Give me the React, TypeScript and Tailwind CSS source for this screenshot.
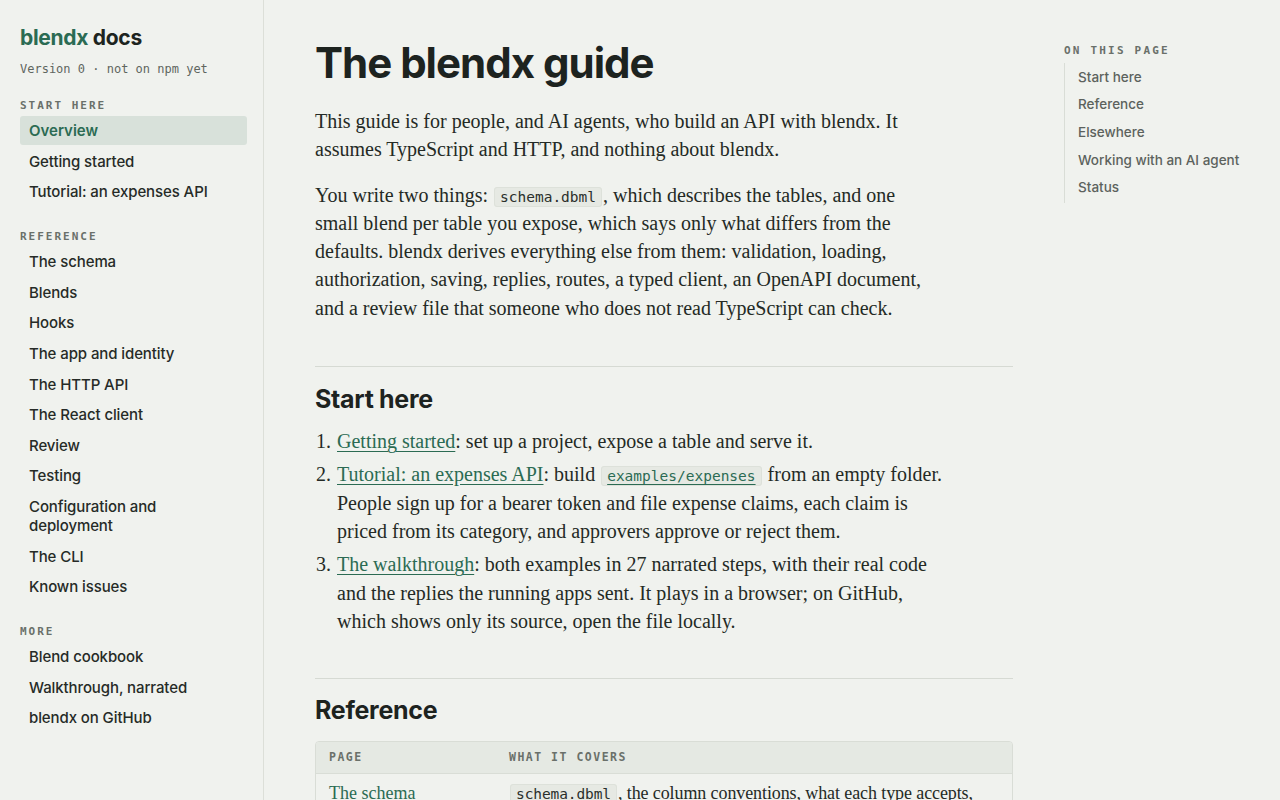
const sans = { fontFamily: 'Inter, "Noto Sans", sans-serif' };

type NavItem = { label: string; active?: boolean };

const nav: { title: string; items: NavItem[] }[] = [
  {
    title: 'Start here',
    items: [{ label: 'Overview', active: true }, { label: 'Getting started' }, { label: 'Tutorial: an expenses API' }],
  },
  {
    title: 'Reference',
    items: [
      { label: 'The schema' },
      { label: 'Blends' },
      { label: 'Hooks' },
      { label: 'The app and identity' },
      { label: 'The HTTP API' },
      { label: 'The React client' },
      { label: 'Review' },
      { label: 'Testing' },
      { label: 'Configuration and deployment' },
      { label: 'The CLI' },
      { label: 'Known issues' },
    ],
  },
  {
    title: 'More',
    items: [{ label: 'Blend cookbook' }, { label: 'Walkthrough, narrated' }, { label: 'blendx on GitHub' }],
  },
];

const toc = ['Start here', 'Reference', 'Elsewhere', 'Working with an AI agent', 'Status'];

function Code({ children, link }: { children: string; link?: boolean }) {
  return (
    <code
      className={
        'mx-[1px] rounded-[3px] border border-[#dde1da] bg-[#e6e9e3] px-[5px] py-[1px] font-["DejaVu_Sans_Mono",monospace] text-[14.5px] leading-none ' +
        (link ? 'text-[#2b6b53] underline decoration-[#2b6b53] underline-offset-[3px]' : 'text-[#2a2f2b]')
      }
    >
      {children}
    </code>
  );
}

function A({ children }: { children: string }) {
  return (
    <a href="#" className="text-[#2b6b53] underline decoration-[1px] underline-offset-[3px]">
      {children}
    </a>
  );
}

function Sidebar() {
  return (
    <aside className="flex h-screen w-[264px] shrink-0 flex-col border-r border-[#dcdfd8] pl-5 pr-4 pt-[24px]" style={sans}>
      <div className="text-[21px] font-bold leading-[28px] tracking-[-0.3px]">
        <span className="text-[#2b6b53]">blendx</span> <span className="text-[#1d2420]">docs</span>
      </div>
      <div className="mt-[9px] font-['DejaVu_Sans_Mono',monospace] text-[12px] leading-[16px] text-[#5f665f]">
        Version 0 · not on npm yet
      </div>
      {nav.map((g, gi) => (
        <div key={g.title} className={gi === 0 ? 'mt-[21px]' : 'mt-[23px]'}>
          <div className="mb-[2px] font-['DejaVu_Sans_Mono',monospace] text-[11px] font-bold uppercase leading-[16px] tracking-[2px] text-[#6a706a]">
            {g.title}
          </div>
          <ul className="flex flex-col gap-[1.6px]">
            {g.items.map((it) => (
              <li
                key={it.label}
                className={
                  'rounded-[3px] px-[9px] py-[5px] text-[15px] leading-[19px] ' +
                  (it.active ? 'bg-[#d8e1da] font-semibold text-[#2b6b53]' : 'font-medium tracking-[-0.1px] text-[#262b27]')
                }
              >
                {it.label}
              </li>
            ))}
          </ul>
        </div>
      ))}
    </aside>
  );
}

export default function App() {
  return (
    <div className="flex h-screen w-full overflow-hidden bg-[#f0f2ee] text-[#242a25]">
      <Sidebar />
      <main className="flex-1 overflow-hidden pl-[51px] pt-[36px]">
        <div className="w-[698px]">
          <h1 className="text-[42px] font-bold leading-[54px] tracking-[-1px] text-[#1d231f]" style={sans}>
            The blendx guide
          </h1>
          <div className="w-[620px] font-['Liberation_Serif',serif] text-[20px] leading-[28.3px]">
            <p className="mt-[17px]">
              This guide is for people, and AI agents, who build an API with blendx. It assumes TypeScript and HTTP, and
              nothing about blendx.
            </p>
            <p className="mt-[17px]">
              You write two things: <Code>schema.dbml</Code>, which describes the tables, and one small blend per table
              you expose, which says only what differs from the defaults. blendx derives everything else from them:
              validation, loading, authorization, saving, replies, routes, a typed client, an OpenAPI document, and a
              review file that someone who does not read TypeScript can check.
            </p>
          </div>
          <hr className="mt-[44px] border-t border-[#d6dad3]" />
          <h2 className="mt-[16px] text-[25px] font-bold leading-[32px] tracking-[-0.3px] text-[#1d231f]" style={sans}>
            Start here
          </h2>
          <ol className="mt-[12px] w-[628px] list-decimal pl-[21px] font-['Liberation_Serif',serif] text-[20px] leading-[28.3px]">
            <li className="pl-[1px]">
              <A>Getting started</A>: set up a project, expose a table and serve it.
            </li>
            <li className="mt-[5px] pl-[1px]">
              <A>Tutorial: an expenses API</A>: build <Code link>examples/expenses</Code> from an empty folder. People
              sign up for a bearer token and file expense claims, each claim is priced from its category, and approvers
              approve or reject them.
            </li>
            <li className="mt-[5px] pl-[1px]">
              <A>The walkthrough</A>: both examples in 27 narrated steps, with their real code and the replies the
              running apps sent. It plays in a browser; on GitHub, which shows only its source, open the file locally.
            </li>
          </ol>
          <hr className="mt-[43px] border-t border-[#d6dad3]" />
          <h2 className="mt-[15px] text-[25px] font-bold leading-[32px] tracking-[-0.3px] text-[#1d231f]" style={sans}>
            Reference
          </h2>
          <div className="mt-[15px] overflow-hidden rounded-[4px] border border-[#d9ddd6]">
            <div className="flex h-[32px] items-center border-b border-[#d9ddd6] bg-[#e5e9e3] font-['DejaVu_Sans_Mono',monospace] text-[11.5px] font-bold uppercase tracking-[1.5px] text-[#6a706a]">
              <div className="w-[193px] pl-[13px]">Page</div>
              <div>What it covers</div>
            </div>
            <div className="flex pt-[6px] font-['Liberation_Serif',serif] text-[18px] leading-[26px]">
              <div className="w-[193px] pl-[13px] text-[#2b6b53]">The schema</div>
              <div className="whitespace-nowrap tracking-[-0.1px]">
                <Code>schema.dbml</Code>, the column conventions, what each type accepts,
              </div>
            </div>
          </div>
        </div>
      </main>
      <nav className="w-[216px] shrink-0 pt-[43px]" style={sans}>
        <div className="font-['DejaVu_Sans_Mono',monospace] text-[11px] font-bold uppercase tracking-[2.2px] text-[#6a706a]">
          On this page
        </div>
        <ul className="mt-[3px] flex flex-col border-l border-[#d9ddd6] py-[1px] pl-[13px]">
          {toc.map((t) => (
            <li key={t} className="py-[4px] text-[13.5px] font-medium leading-[19.7px] text-[#5c625d]">
              {t}
            </li>
          ))}
        </ul>
      </nav>
    </div>
  );
}
